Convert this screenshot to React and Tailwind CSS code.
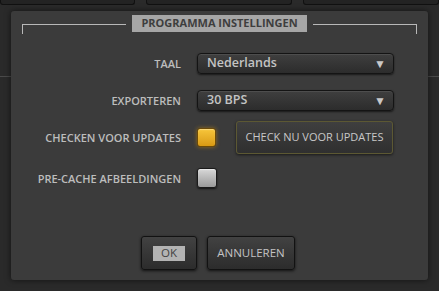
import React from "react";

const font = { fontFamily: '"Open Sans", "Noto Sans", sans-serif' };

function Dropdown({ value }) {
  return (
    <div className="flex h-[21px] w-[197px] items-center justify-between rounded-[4px] border border-[#141414] bg-gradient-to-b from-[#3f3f3f] to-[#2c2c2c] pl-[9px] pr-[7px] shadow-[0_1px_2px_rgba(0,0,0,0.6),inset_0_1px_0_rgba(255,255,255,0.08)]">
      <span className="text-[12.5px] font-semibold leading-none text-[#c4c4c4]">{value}</span>
      <span className="text-[12px] leading-none text-[#c8c8c8]">▼</span>
    </div>
  );
}

function Label({ children }) {
  return (
    <div className="w-[170px] text-right text-[11px] font-semibold leading-none text-[#bdbdbd]">
      {children}
    </div>
  );
}

export default function App() {
  return (
    <div className="relative h-[291px] w-[439px] overflow-hidden bg-[#2a2a2a]" style={font}>
      <div className="flex gap-[11px]">
        <div className="h-[5px] w-[135px] rounded-b-[3px] border border-t-0 border-[#111] bg-[#232323]" />
        <div className="h-[5px] w-[146px] rounded-b-[3px] border border-t-0 border-[#111] bg-[#232323]" />
        <div className="h-[5px] w-[136px] rounded-b-[3px] border border-t-0 border-[#111] bg-[#232323]" />
      </div>
      <div className="mt-[71px] h-px w-full bg-[#4a4a4a]" />

      <div className="absolute left-[11px] top-[11px] h-[269px] w-[417px] rounded-[3px] bg-[#3b3b3b] shadow-[0_0_6px_rgba(0,0,0,0.6)]">
        <div className="relative mx-[11px] mt-[4px] flex h-[18px] items-start">
          <div className="mt-[9px] h-[10px] flex-1 border-l border-t border-[#b8b8b8]" />
          <div className="mx-[6px] flex h-[17px] w-[175px] items-center justify-center bg-[#a6a6a6] text-[11px] font-bold text-[#3e3e3e]">
            PROGRAMMA INSTELLINGEN
          </div>
          <div className="mt-[9px] h-[10px] flex-1 border-r border-t border-[#b8b8b8]" />
        </div>

        <div className="mt-[20px] flex flex-col">
          <div className="flex h-[21px] items-center gap-[16px]">
            <Label>TAAL</Label>
            <Dropdown value="Nederlands" />
          </div>
          <div className="mt-[16px] flex h-[21px] items-center gap-[16px]">
            <Label>EXPORTEREN</Label>
            <Dropdown value="30 BPS" />
          </div>
          <div className="mt-[10px] flex h-[33px] items-center gap-[16px]">
            <Label>CHECKEN VOOR UPDATES</Label>
            <div className="h-[19px] w-[19px] rounded-[3px] border border-[#6b4a08] bg-gradient-to-b from-[#f7c63a] to-[#d99a12] shadow-[0_0_4px_rgba(255,170,0,0.45),inset_0_1px_1px_rgba(255,255,255,0.35)]" />
            <div className="ml-[4px] flex h-[33px] w-[157px] items-center justify-center rounded-[3px] border border-[#5c5833] bg-gradient-to-b from-[#3f3f3f] to-[#2f2f2f] text-[11px] text-[#c8c8c8] shadow-[0_1px_3px_rgba(0,0,0,0.6)]">
              CHECK NU VOOR UPDATES
            </div>
          </div>
          <div className="mt-[14px] flex h-[20px] items-center gap-[16px]">
            <Label>PRE-CACHE AFBEELDINGEN</Label>
            <div className="h-[20px] w-[20px] rounded-[3px] border border-[#1a1a1a] bg-gradient-to-b from-[#d8d8d8] to-[#9a9a9a] shadow-[0_1px_2px_rgba(0,0,0,0.7),inset_0_1px_1px_rgba(255,255,255,0.5)]" />
          </div>
        </div>

        <div className="mt-[48px] flex justify-center gap-[10px] pr-[3px]">
          <div className="flex h-[34px] w-[56px] items-center justify-center rounded-[3px] border border-[#121212] bg-gradient-to-b from-[#424242] to-[#2c2c2c] shadow-[0_1px_3px_rgba(0,0,0,0.7)]">
            <span className="flex h-[15px] w-[32px] items-center justify-center bg-[#b3b3b3] text-[11.5px] text-[#444]">OK</span>
          </div>
          <div className="flex h-[34px] w-[88px] items-center justify-center rounded-[3px] border border-[#121212] bg-gradient-to-b from-[#424242] to-[#2c2c2c] text-[11.5px] text-[#c4c4c4] shadow-[0_1px_3px_rgba(0,0,0,0.7)]">
            ANNULEREN
          </div>
        </div>
      </div>
    </div>
  );
}
